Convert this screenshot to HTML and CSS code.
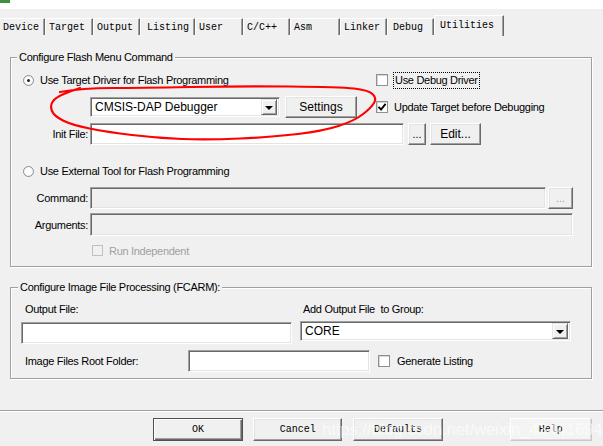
FILE: index.html
```html
<!DOCTYPE html>
<html lang="en">
<head>
    <meta charset="UTF-8">
    <title>Options for Target</title>
    <link rel="stylesheet" href="styles.css">
</head>
<body>
    <div class="titlebar"><span class="app-icon"></span></div>

    <div class="tabstrip">
        <div class="tab">Device</div>
        <div class="tab">Target</div>
        <div class="tab">Output</div>
        <div class="tab">Listing</div>
        <div class="tab">User</div>
        <div class="tab">C/C++</div>
        <div class="tab">Asm</div>
        <div class="tab">Linker</div>
        <div class="tab">Debug</div>
        <div class="tab active">Utilities</div>
    </div>

    <div class="page">
        <div class="group flash-group">
            <div class="legend">Configure Flash Menu Command</div>

            <div class="row row-driver">
                <div class="opt-main">
                    <span class="radio checked"></span>
                    <span class="opt-label">Use Target Driver for Flash Programming</span>
                </div>
                <span class="check"></span>
                <span class="opt-label focus">Use Debug Driver</span>
            </div>

            <div class="row row-select">
                <div class="combo driver-combo">
                    <span class="combo-text">CMSIS-DAP Debugger</span>
                    <span class="combo-btn"></span>
                </div>
                <button class="btn settings-btn">Settings</button>
                <span class="check checked">
                    <svg viewBox="0 0 10 10"><path d="M1.5 4.8 L4 7.5 L8.6 1.8" fill="none" stroke="#000" stroke-width="1.9"/></svg>
                </span>
                <span class="opt-label">Update Target before Debugging</span>
            </div>

            <div class="row row-init">
                <label class="field-label">Init File:</label>
                <div class="field init-field"></div>
                <button class="btn dots-btn">...</button>
                <button class="btn edit-btn">Edit...</button>
            </div>

            <div class="row row-external">
                <span class="radio"></span>
                <span class="opt-label">Use External Tool for Flash Programming</span>
            </div>

            <div class="row row-command">
                <label class="field-label">Command:</label>
                <div class="field disabled command-field"></div>
                <button class="btn dots-btn wide-dots" disabled>...</button>
            </div>

            <div class="row row-args">
                <label class="field-label">Arguments:</label>
                <div class="field disabled args-field"></div>
            </div>

            <div class="row row-run">
                <span class="check disabled"></span>
                <span class="opt-label muted">Run Independent</span>
            </div>
        </div>

        <div class="group image-group">
            <div class="legend">Configure Image File Processing (FCARM):</div>

            <div class="row row-captions">
                <span class="caption output-caption">Output File:</span>
                <span class="caption">Add Output File&nbsp;&nbsp;to Group:</span>
            </div>

            <div class="row row-output">
                <div class="field output-field"></div>
                <div class="combo group-combo">
                    <span class="combo-text">CORE</span>
                    <span class="combo-btn"></span>
                </div>
            </div>

            <div class="row row-root">
                <span class="caption root-caption">Image Files Root Folder:</span>
                <div class="field root-field"></div>
                <span class="check"></span>
                <span class="opt-label">Generate Listing</span>
            </div>
        </div>

        <div class="separator"></div>

        <div class="actions">
            <button class="btn dialog-btn default-btn">OK</button>
            <button class="btn dialog-btn">Cancel</button>
            <button class="btn dialog-btn">Defaults</button>
            <button class="btn dialog-btn help-btn">Help</button>
        </div>
    </div>

    <!-- hand-drawn marker around the driver selector -->
    <svg class="marker" width="603" height="446" viewBox="0 0 603 446">
        <path d="M60 92 Q83 88 111.5 88 Q140 88 190 87 Q240 86 290 86.5 Q340 87 354 88.5 Q368 90 372.5 94 Q377 98 374 103 Q371 108 362.5 114.5 Q354 121 338.5 126 Q323 131 298 134 Q273 137 240 138.5 Q207 140 182 139 Q157 138 132 135 Q107 132 89.5 128.5 Q72 125 63 120.5 Q54 116 52 111 Q50 106 52.5 102 Q55 98 61.5 95 Q68 92 80 88"
              fill="none" stroke="#f00" stroke-width="2.2" stroke-linecap="round"/>
    </svg>

    <div class="watermark">https://blog.csdn.net/weixin_43441694</div>
</body>
</html>
```

FILE: styles.css
```css
body {
    margin: 0;
    width: 603px;
    height: 446px;
    overflow: hidden;
    position: relative;
    background: #f0f0f0;
    color: #000;
    font-family: "Liberation Sans", Arial, sans-serif;
    font-size: 11px;
    letter-spacing: -0.3px;
}

/* window caption, cut off at the top */
.titlebar {
    height: 9px;
    background: #fff;
}

.app-icon {
    display: block;
    width: 10px;
    height: 3px;
    background: #3f8f3f;
}

/* tab strip */
.tabstrip {
    display: flex;
    align-items: flex-end;
    height: 27px;
    font-family: "Liberation Mono", "Courier New", monospace;
    font-size: 10px;
    letter-spacing: 0;
}

.tab {
    box-sizing: border-box;
    height: 17px;
    margin-bottom: 1px;
    padding: 1px 0 0 3px;
    line-height: 15px;
    border-top: 1px solid #fff;
    border-left: 1px solid #fff;
    border-right: 1px solid #696969;
    box-shadow: inset -1px 0 #a0a0a0;
    white-space: nowrap;
}

.tab:nth-child(1) { width: 45px; padding-left: 2px; border-left-color: transparent; }
.tab:nth-child(2) { width: 48px; }
.tab:nth-child(3) { width: 47px; }
.tab:nth-child(4) { width: 55px; padding-left: 6px; }
.tab:nth-child(5) { width: 48px; }
.tab:nth-child(6) { width: 47px; }
.tab:nth-child(7) { width: 50px; }
.tab:nth-child(8) { width: 47px; }
.tab:nth-child(9) { width: 47px; padding-left: 5px; }

.tab.active {
    width: 70px;
    height: 21px;
    margin-bottom: 0;
    padding: 2px 0 0 5px;
    line-height: 16px;
}

/* group boxes */
.group {
    box-sizing: border-box;
    width: 582px;
    margin-left: 10px;
    border: 1px solid #a0a0a0;
    box-shadow: 1px 1px 0 #fff, inset 1px 1px 0 #fff;
}

.flash-group {
    height: 210px;
    margin-top: 21px;
}

.image-group {
    height: 92px;
    margin-top: 20px;
}

.legend {
    width: fit-content;
    height: 13px;
    margin: -7px 0 0 6px;
    padding: 0 2px;
    line-height: 13px;
    background: #f0f0f0;
}

.image-group .legend {
    margin-left: 7px;
}

.row {
    display: flex;
    align-items: center;
}

.opt-main {
    display: flex;
    align-items: center;
    width: 353px;
}

.opt-label {
    margin-left: 6px;
    white-space: nowrap;
}

.opt-label.focus {
    margin-left: 5px;
    padding: 1px 1px 2px;
    border: 1px dotted #000;
}

.opt-label.muted {
    color: #a0a0a0;
}

.field-label {
    width: 77px;
    margin-right: 2px;
    text-align: right;
    white-space: nowrap;
}

.caption {
    white-space: pre;
}

/* radio buttons and check boxes */
.radio {
    box-sizing: border-box;
    width: 11px;
    height: 11px;
    border: 1px solid #8f8f8f;
    border-radius: 50%;
    background: radial-gradient(circle, #fff 40%, #e6e6e6 100%);
    display: flex;
    align-items: center;
    justify-content: center;
}

.radio.checked::after {
    content: "";
    width: 3px;
    height: 3px;
    border-radius: 50%;
    background: #222;
}

.check {
    box-sizing: border-box;
    width: 12px;
    height: 12px;
    border: 1px solid #8f8f8f;
    background: #fff;
    box-shadow: inset 1px 1px #d6d6d6;
    display: flex;
    align-items: center;
    justify-content: center;
}

.check svg {
    width: 10px;
    height: 10px;
}

.check.disabled {
    width: 11px;
    height: 11px;
    border-color: #c0c0c0;
    background: #f0f0f0;
    box-shadow: none;
}

/* edit fields */
.field {
    box-sizing: border-box;
    height: 22px;
    background: #fff;
    border: 1px solid;
    border-color: #a0a0a0 #fff #fff #a0a0a0;
    box-shadow: inset 1px 1px #696969, inset -1px -1px #e3e3e3;
}

.field.disabled {
    background: #f0f0f0;
}

/* combo boxes */
.combo {
    box-sizing: border-box;
    display: flex;
    align-items: center;
    height: 20px;
    padding: 0 2px 0 4px;
    background: #fff;
    border: 1px solid;
    border-color: #a0a0a0 #fff #fff #a0a0a0;
    box-shadow: inset 1px 1px #696969, inset -1px -1px #e3e3e3;
}

.combo-text {
    flex: 1;
    font-size: 12px;
    letter-spacing: 0;
}

.combo-btn {
    box-sizing: border-box;
    width: 16px;
    height: 16px;
    background: #f0f0f0;
    border: 1px solid;
    border-color: #e3e3e3 #696969 #696969 #e3e3e3;
    box-shadow: inset 1px 1px #fff, inset -1px -1px #a0a0a0;
    display: flex;
    align-items: center;
    justify-content: center;
}

.combo-btn::after {
    content: "";
    border-left: 4px solid transparent;
    border-right: 4px solid transparent;
    border-top: 4px solid #000;
    margin-top: 1px;
}

/* push buttons */
.btn {
    box-sizing: border-box;
    height: 22px;
    padding: 0;
    background: #f0f0f0;
    color: #000;
    font-family: inherit;
    font-size: 12px;
    letter-spacing: 0;
    border: 1px solid;
    border-color: #fff #696969 #696969 #fff;
    box-shadow: inset -1px -1px #a0a0a0, inset 1px 1px #e3e3e3;
}

.btn:disabled {
    color: #a0a0a0;
}

/* flash group rows */
.row-driver {
    height: 16px;
    margin-top: 8px;
    padding-left: 12px;
}

.row-select {
    height: 22px;
    margin-top: 8px;
    padding-left: 79px;
}

.driver-combo {
    width: 190px;
}

.settings-btn {
    width: 72px;
    margin: 0 19px 0 5px;
}

.row-init {
    height: 22px;
    margin-top: 5px;
}

.init-field {
    width: 314px;
}

.dots-btn {
    width: 18px;
    margin-left: 4px;
    font-size: 11px;
    line-height: 12px;
}

.edit-btn {
    width: 51px;
    margin-left: 4px;
}

.row-external {
    height: 14px;
    margin-top: 19px;
    padding-left: 12px;
}

.row-command {
    height: 22px;
    margin-top: 9px;
}

.command-field {
    width: 456px;
}

.wide-dots {
    width: 25px;
    margin-left: 2px;
}

.row-args {
    height: 23px;
    margin-top: 4px;
}

.args-field {
    width: 483px;
    height: 23px;
}

.row-run {
    height: 13px;
    margin-top: 8px;
    padding-left: 81px;
}

/* image file group rows */
.row-captions {
    height: 14px;
    margin-top: 8px;
    padding-left: 14px;
}

.output-caption {
    width: 278px;
}

.row-output {
    align-items: flex-start;
    height: 23px;
    margin-top: 5px;
    padding-left: 10px;
}

.output-field {
    width: 271px;
    margin-top: 1px;
}

.group-combo {
    width: 271px;
    margin-left: 8px;
}

.row-root {
    height: 22px;
    margin-top: 6px;
    padding-left: 14px;
}

.root-caption {
    width: 163px;
}

.root-field {
    width: 182px;
    margin-right: 8px;
}

.row-root .opt-label {
    margin-left: 7px;
}

/* dialog buttons */
.separator {
    margin-top: 31px;
    border-top: 1px solid #a0a0a0;
    border-bottom: 1px solid #fff;
}

.actions {
    display: flex;
    height: 23px;
    margin-top: 6px;
    padding-left: 153px;
}

.dialog-btn {
    width: 91px;
    height: 23px;
    margin-right: 11px;
    font-family: "Liberation Mono", "Courier New", monospace;
    font-size: 10px;
}

.default-btn {
    width: 92px;
    margin-right: 10px;
    border-color: #505050;
    box-shadow: inset 1px 1px #fff, inset -1px -1px #696969, inset -2px -2px #a0a0a0;
}

.help-btn {
    width: 84px;
    margin-left: 56px;
    background: #f4f4f4;
    border-color: #fff #c8c8c8 #c8c8c8 #fff;
    box-shadow: inset -1px -1px #dcdcdc;
}

/* overlays */
.marker {
    position: absolute;
    top: 0;
    left: 0;
    pointer-events: none;
}

.watermark {
    position: absolute;
    left: 322px;
    top: 420px;
    font-family: "Liberation Sans", Arial, sans-serif;
    font-size: 16.5px;
    letter-spacing: 0;
    color: rgba(255, 255, 255, 0.65);
    white-space: nowrap;
    pointer-events: none;
}
```
